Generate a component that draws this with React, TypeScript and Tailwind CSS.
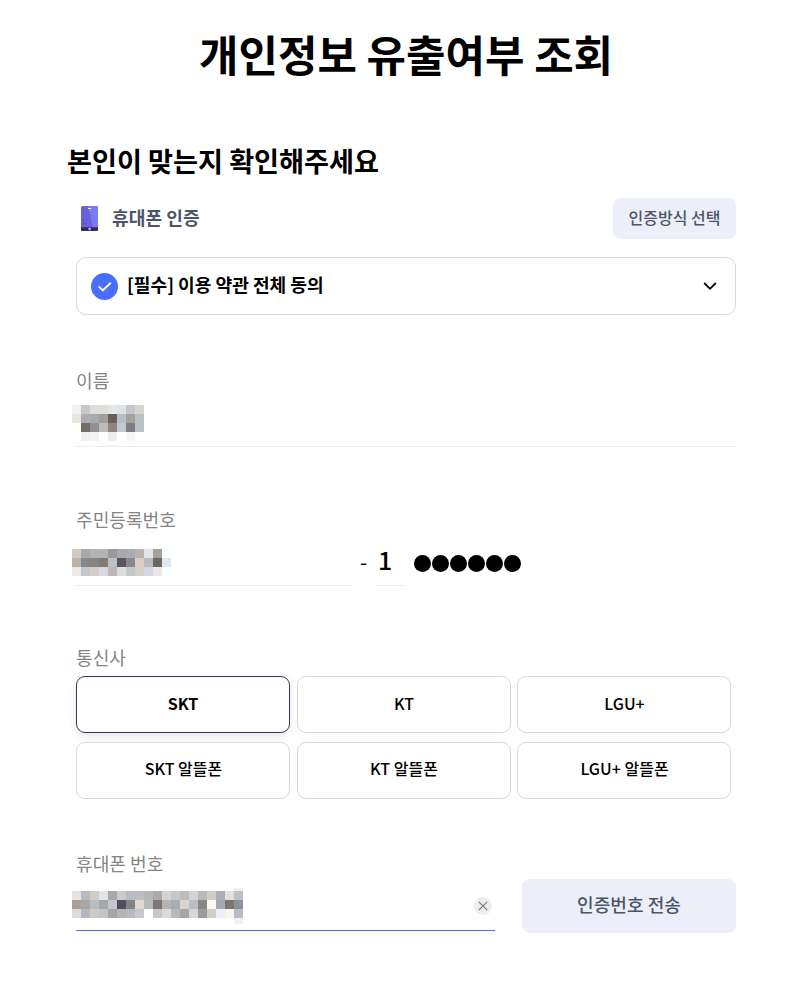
import React from "react";

const nameCells = [
  ["#f1f1f1", "#c5c9c9", "#dddddd", "#e1ddd9", "#e5e6e8", "#dde2e7", "#c3c7c9", "#d8d5d1"],
  ["#e6e6e4", "#abadb2", "#aaa9ad", "#a09f9b", "#6d5d5b", "#b8bfc7", "#a5a39e", "#bcc1c5"],
  ["#fffffa", "#756b69", "#8f9197", "#c1babb", "#8b8683", "#c1c8d0", "#7d7f85", "#bdc1c6"],
  ["#ffffff", "#efefef", "#f3f3f3", "#fdfdfd", "#ececec", "#ffffff", "#f5f7f7", "#ffffff"],
];

const birthCells = [
  ["#cfcac5", "#a7a9ab", "#b5b3b0", "#b5b3b2", "#999998", "#a7a9ab", "#abacb2", "#bab2ad", "#dfe4e8", "#a1a09f", "#f7ffff"],
  ["#bab2ab", "#85878a", "#858483", "#827b78", "#bac0c5", "#5c5461", "#86888c", "#d6cec4", "#b6bbc0", "#6d6663", "#dfe6ef"],
  ["#eae9e7", "#c3c7ca", "#d2cdca", "#d7dbe1", "#bfb7b7", "#dcdddd", "#c3c8cb", "#d3cec9", "#d4d7df", "#e9e7e5", "#fafffe"],
];

const phoneCells = [
  ["#e5e2df", "#b5bac3", "#d0cdc7", "#e1e5e9", "#aaa7aa", "#c7cbca", "#b9bcc3", "#bbbfc1", "#b6b6b7", "#aba9aa", "#d3d3d0", "#c5c8ca", "#bfbdb9", "#d5d4d2", "#b5b9bd", "#cecdc8", "#a9b0bb", "#e4e1dd", "#bdc1c5"],
  ["#a6a19d", "#aaa6a3", "#bbbebf", "#a6a9aa", "#c2c7cb", "#554b5b", "#818489", "#e1d9d1", "#b7b9ba", "#7e7773", "#b3b4b5", "#a7adb3", "#d9d5d0", "#b8bec4", "#888786", "#f9faf6", "#a8a9ab", "#7d7571", "#8c919d"],
  ["#dedad9", "#b3b9c3", "#cdc9c4", "#c2c6ca", "#aaa5a5", "#b2b4b9", "#b6babf", "#c5c9cc", "#ffffff", "#c4c8ca", "#dedad6", "#b5bac0", "#aaa5a3", "#d5d7d8", "#9b9b99", "#d3d0cb", "#edf0fb", "#f8f5ed", "#b9bcc2"],
];

function Mosaic({ cells }: { cells: string[][] }) {
  return (
    <div className="-ml-1 w-fit">
      {cells.map((row, y) => (
        <div key={y} className="flex">
          {row.map((color, x) => (
            <span key={x} className="size-[9px]" style={{ backgroundColor: color }} />
          ))}
        </div>
      ))}
    </div>
  );
}

function PhoneIcon() {
  return (
    <svg className="mt-px" width="17" height="25" viewBox="0 0 17 26" preserveAspectRatio="none">
      <defs>
        <clipPath id="phone-body">
          <rect width="17" height="26" rx="1.6" />
        </clipPath>
      </defs>
      <g clipPath="url(#phone-body)">
        <path fill="#6a62dc" d="M0 0h17v26H0z" />
        <path fill="#7d79f2" d="M7 0h10v22h-5z" />
        <path fill="#2c2c5c" d="M0 22h17v4H0z" />
        <path fill="#fff" d="M7 2h3v1.2H7z" />
        <rect x="7.5" y="22.7" width="2.2" height="2.4" rx=".7" fill="#c9c9ee" />
        <path fill="#3834a0" d="M2 14h1v1H2zM3 18h1v1H3z" />
      </g>
    </svg>
  );
}

const carriers = ["SKT", "KT", "LGU+", "SKT 알뜰폰", "KT 알뜰폰", "LGU+ 알뜰폰"];

function Label({ children }: { children: React.ReactNode }) {
  return <div className="h-[26px] text-[18.1px] leading-[24px] text-[#858585]">{children}</div>;
}

export default function App() {
  return (
    <main className="h-[996px] w-[788px] bg-white pr-[52px] pl-[67px] font-['Noto_Sans_CJK_KR',sans-serif] text-black">
      <h1 className="ml-[132px] h-[142px] pt-[21px] text-[42.9px] leading-[64px] font-bold whitespace-nowrap">
        개인정보 유출여부 조회
      </h1>
      <h2 className="h-[56px] text-[27.15px] leading-[38px] font-bold">본인이 맞는지 확인해주세요</h2>

      <div className="ml-[9px]">
        <div className="flex h-[41px] items-center justify-between">
          <div className="flex h-[41px] items-start pt-[7px] pl-[5px] text-[18.15px] leading-[24px] font-bold text-[#4e5468]">
            <PhoneIcon />
            <span className="ml-[14px]">휴대폰 인증</span>
          </div>
          <button className="h-[41px] w-[123px] rounded-lg bg-[#eceff9] pb-[3px] text-[16px] font-medium text-[#4e5468]">
            인증방식 선택
          </button>
        </div>

        <div className="mt-[18px] flex h-[58px] items-center rounded-[10px] border border-[#dadada] pr-[18px] pl-[14px]">
          <svg width="27" height="27" viewBox="0 0 27 27" fill="none">
            <circle cx="13.5" cy="13.5" r="13.5" fill="#476eff" />
            <path d="M7.7 13.4l4.1 4 8-7.6" stroke="#fff" strokeWidth="2" />
          </svg>
          <span className="ml-[9px] pb-[5px] text-[18.1px] leading-[26px] font-bold">[필수] 이용 약관 전체 동의</span>
          <svg className="ml-auto" width="14" height="10" viewBox="0 0 14 10" fill="none">
            <path d="M1.2 2L7 7.8 12.8 2" stroke="#000" strokeWidth="1.8" />
          </svg>
        </div>

        <section className="mt-[53px] h-[79px] border-b border-[#ececec]">
          <Label>이름</Label>
          <div className="pt-[11px]">
            <Mosaic cells={nameCells} />
          </div>
        </section>

        <section className="mt-[60px] h-[79px]">
          <Label>주민등록번호</Label>
          <div className="flex h-[53px]">
            <div className="w-[275px] border-b border-[#ececec] pt-[16px]">
              <Mosaic cells={birthCells} />
            </div>
            <span className="w-[26px] pt-[12px] pl-[9px] text-[21px] leading-[32px]">-</span>
            <div className="w-[27px] border-b border-[#ececec] pt-[7px] pl-[1px] text-[25px] leading-[38px] font-medium">
              1
            </div>
            <div className="ml-[10px] flex gap-px pt-[22px]">
              {[0, 1, 2, 3, 4, 5].map((dot) => (
                <span key={dot} className="size-[17px] rounded-full bg-black" />
              ))}
            </div>
          </div>
        </section>

        <section className="mt-[59px]">
          <Label>통신사</Label>
          <div className="mt-[5px] grid w-[655px] grid-cols-3 gap-x-[6.5px] gap-y-[9px]">
            {carriers.map((carrier, index) => (
              <button
                key={carrier}
                className={
                  index === 0
                    ? "h-[57px] rounded-[9px] border border-[#343858] pb-[4px] text-[16px] font-bold shadow-[0_3px_8px_rgba(0,0,0,0.1)]"
                    : index < 3
                      ? "h-[57px] rounded-[9px] border border-[#dadada] pb-[4px] pl-[1px] text-[16px] font-medium"
                      : "h-[57px] rounded-[9px] border border-[#dadada] pb-[5px] pl-[1px] text-[16px] font-medium"
                }
              >
                {carrier}
              </button>
            ))}
          </div>
        </section>

        <section className="mt-[52px]">
          <Label>휴대폰 번호</Label>
          <div className="flex items-start justify-between">
            <div className="mt-[2px] flex h-[52px] w-[419px] justify-between border-b border-[#476eff]">
              <div className="relative mt-[12px] h-[27px]">
                <Mosaic cells={phoneCells} />
                <span className="absolute -top-[3px] right-0 h-[3px] w-[9px] bg-[#f1f1f1]" />
                <span className="absolute right-0 -bottom-[6px] h-[6px] w-[9px] bg-[#f1f1f1]" />
              </div>
              <svg className="mt-[18px] mr-[3px]" width="18" height="18" viewBox="0 0 18 18" fill="none">
                <circle cx="9" cy="9" r="9" fill="#ededeb" />
                <path d="M4.8 4.8l8.4 8.4M13.2 4.8l-8.4 8.4" stroke="#777" strokeWidth="1.1" />
              </svg>
            </div>
            <button className="mt-[2px] h-[54px] w-[214px] rounded-lg bg-[#eceff9] pb-[3px] text-[18.1px] font-medium text-[#4e5468]">
              인증번호 전송
            </button>
          </div>
        </section>
      </div>
    </main>
  );
}
